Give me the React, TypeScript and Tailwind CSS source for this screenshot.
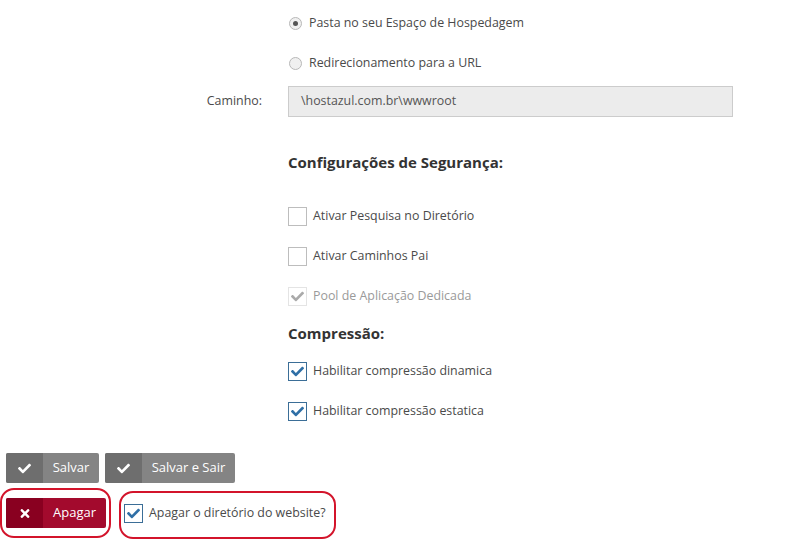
import { FC, ReactNode } from 'react';

const CHECK =
  'M173.898 439.404l-166.4-166.4c-9.997-9.997-9.997-26.206 0-36.204l36.203-36.204c9.997-9.998 26.207-9.998 36.204 0L192 312.69 432.095 72.596c9.997-9.997 26.207-9.997 36.204 0l36.203 36.204c9.997 9.997 9.997 26.206 0 36.204l-294.4 294.401c-9.998 9.997-26.207 9.997-36.204-.001z';
const TIMES =
  'M242.72 256l100.07-100.07c12.28-12.28 12.28-32.19 0-44.48l-22.24-22.24c-12.28-12.28-32.19-12.28-44.48 0L176 189.28 75.93 89.21c-12.28-12.28-32.19-12.28-44.48 0L9.21 111.45c-12.28 12.28-12.28 32.19 0 44.48L109.28 256 9.21 356.07c-12.28 12.28-12.28 32.19 0 44.48l22.24 22.24c12.28 12.28 32.2 12.28 44.48 0L176 322.72l100.07 100.07c12.28 12.28 32.2 12.28 44.48 0l22.24-22.24c12.28-12.28 12.28-32.19 0-44.48L242.72 256z';

const CheckIcon: FC<{ className?: string }> = ({ className }) => (
  <svg viewBox="0 0 512 512" className={className} fill="currentColor">
    <path d={CHECK} />
  </svg>
);

const Radio: FC<{ checked?: boolean; label: string }> = ({ checked, label }) => (
  <div className="flex items-center h-5">
    <span className="w-[13px] h-[13px] rounded-full border border-[#b8b8b8] bg-[#f0f0f0] flex items-center justify-center ml-[1px]">
      {checked && <span className="w-[5px] h-[5px] rounded-full bg-[#555]" />}
    </span>
    <span className="ml-[7px]">{label}</span>
  </div>
);

const Checkbox: FC<{ checked?: boolean; disabled?: boolean; label: string }> = ({ checked, disabled, label }) => (
  <div className="flex items-center h-5">
    {disabled ? (
      <span className="w-[19px] h-[19px] border border-[#e4e4e4] flex items-center justify-center">
        <CheckIcon className="w-[13px] h-[13px] text-[#aaa]" />
      </span>
    ) : (
      <span
        className={`w-[19px] h-[19px] border flex items-center justify-center bg-white ${
          checked ? 'border-[#3b6e97]' : 'border-[#bdbdbd]'
        }`}
      >
        {checked && <CheckIcon className="w-[13px] h-[13px] text-[#2f6fa6]" />}
      </span>
    )}
    <span className={`ml-[6px] ${disabled ? 'text-[#9a9a9a]' : ''}`}>{label}</span>
  </div>
);

const Btn: FC<{ icon: ReactNode; label: string; variant: 'gray' | 'red'; width: string }> = ({ icon, label, variant, width }) => (
  <button
    className={`flex h-[30px] rounded-[2px] overflow-hidden text-white text-[13px] ${width} ${
      variant === 'gray' ? 'bg-[#848484]' : 'bg-[#a30a2d]'
    }`}
  >
    <span
      className={`w-[37px] flex items-center justify-center ${
        variant === 'gray' ? 'bg-[#6e6e6e]' : 'bg-[#890020]'
      }`}
    >
      {icon}
    </span>
    <span className="flex-1 flex items-center justify-center">{label}</span>
  </button>
);

export default function App() {
  return (
    <div
      className="w-[789px] h-[539px] bg-white text-[12.4px] text-[#4a4a4a] relative overflow-hidden"
      style={{ fontFamily: '"Open Sans", "Liberation Sans", sans-serif' }}
    >
      {/* Main form column */}
      <div className="pl-[288px] pt-[13px]">
        <Radio checked label="Pasta no seu Espaço de Hospedagem" />
        <div className="mt-[20px]">
          <Radio label="Redirecionamento para a URL" />
        </div>
      </div>

      <div className="flex items-center mt-[13px]">
        <label className="w-[288px] pr-[26px] text-right">Caminho:</label>
        <div className="w-[445px] h-[31px] bg-[#ececec] border border-[#cccccc] flex items-center pl-[12px] text-[#555]">
          \hostazul.com.br\wwwroot
        </div>
      </div>

      <div className="pl-[288px]">
        <h3 className="mt-[35px] h-5 flex items-center text-[15px] font-bold text-[#333]">
          Configurações de Segurança:
        </h3>
        <div className="mt-[34px] flex flex-col gap-[20px]">
          <Checkbox label="Ativar Pesquisa no Diretório" />
          <Checkbox label="Ativar Caminhos Pai" />
          <Checkbox disabled checked label="Pool de Aplicação Dedicada" />
        </div>
        <h3 className="mt-[17px] h-5 flex items-center text-[15px] font-bold text-[#333]">Compressão:</h3>
        <div className="mt-[18px] flex flex-col gap-[20px]">
          <Checkbox checked label="Habilitar compressão dinamica" />
          <Checkbox checked label="Habilitar compressão estatica" />
        </div>
      </div>

      {/* Actions */}
      <div className="pl-[6px] mt-[32px] flex gap-[6px]">
        <Btn variant="gray" width="w-[93px]" label="Salvar" icon={<CheckIcon className="w-[13px] h-[13px]" />} />
        <Btn variant="gray" width="w-[130px]" label="Salvar e Sair" icon={<CheckIcon className="w-[13px] h-[13px]" />} />
      </div>

      <div className="pl-[6px] mt-[15px] flex items-center">
        <div className="relative">
          <Btn
            variant="red"
            width="w-[100px]"
            label="Apagar"
            icon={
              <svg viewBox="0 0 352 512" className="w-[10px] h-[13px]" fill="currentColor">
                <path d={TIMES} />
              </svg>
            }
          />
          <span className="absolute left-[-6px] top-[-10px] w-[111px] h-[50px] border-2 border-[#d3142b] rounded-[14px] pointer-events-none" />
        </div>
        <div className="relative ml-[18px]">
          <Checkbox checked label="Apagar o diretório do website?" />
          <span className="absolute left-[-5px] top-[-12px] w-[217px] h-[48px] border-2 border-[#d3142b] rounded-[14px] pointer-events-none" />
        </div>
      </div>
    </div>
  );
}
